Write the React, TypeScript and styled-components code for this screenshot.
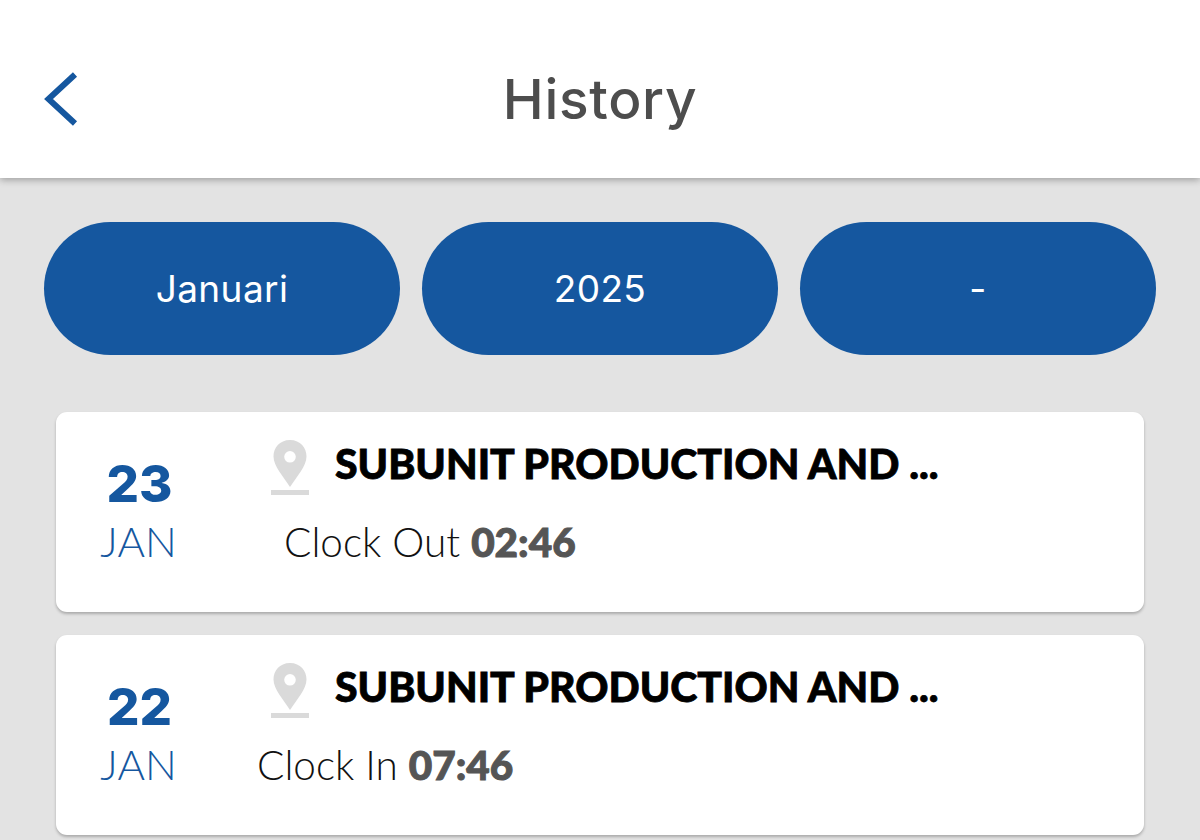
import React from "react";
import styled, { createGlobalStyle } from "styled-components";

const history = [
  { day: "23", month: "JAN", label: "Clock Out", time: "02:46", indent: 27 },
  { day: "22", month: "JAN", label: "Clock In", time: "07:46", indent: 0 },
];

export default function App() {
  return (
    <Page>
      <GlobalStyle />
      <Header>
        <BackButton>
          <svg width="36" height="56" viewBox="0 0 36 56" fill="none">
            <path d="M32 3.5 L5.5 28 L32 52.5" stroke="#15579f" strokeWidth="6" />
          </svg>
        </BackButton>
        <Title>History</Title>
      </Header>
      <Filters>
        <Pill>Januari</Pill>
        <Pill>2025</Pill>
        <Pill>-</Pill>
      </Filters>
      <CardList>
        {history.map((item) => (
          <Card key={item.day}>
            <DateBlock>
              <Day>{item.day}</Day>
              <Month>{item.month}</Month>
            </DateBlock>
            <Details>
              <LocationRow>
                <svg width="40" height="56" viewBox="0 0 40 56">
                  <path
                    fillRule="evenodd"
                    d="M20 0 C9.5 0 3.5 8 3.5 16.5 C3.5 26 13 36 20 47 C27 36 36.5 26 36.5 16.5 C36.5 8 30.5 0 20 0 Z M20 11 A5.8 5.8 0 1 0 20 22.6 A5.8 5.8 0 1 0 20 11 Z"
                    fill="#dadada"
                  />
                  <rect x="1" y="50" width="38" height="5" fill="#dadada" />
                </svg>
                <Location>SUBUNIT PRODUCTION AND ...</Location>
              </LocationRow>
              <ClockRow $indent={item.indent}>
                {item.label} <Time>{item.time}</Time>
              </ClockRow>
            </Details>
          </Card>
        ))}
      </CardList>
    </Page>
  );
}

const GlobalStyle = createGlobalStyle`
  html, body {
    margin: 0;
    padding: 0;
    background: #e3e3e3;
  }
`;

const Page = styled.div`
  width: 1200px;
  height: 840px;
  overflow: hidden;
  background: #e3e3e3;
`;

const Header = styled.header`
  height: 178px;
  background: #fff;
  box-shadow: 0 2px 7px rgba(0, 0, 0, 0.3);
  display: flex;
  align-items: center;
  justify-content: center;
  position: relative;
`;

const BackButton = styled.div`
  position: absolute;
  left: 43px;
  top: 71px;
  line-height: 0;
`;

const Title = styled.h1`
  margin: 0;
  font-family: Inter, "Liberation Sans", sans-serif;
  font-size: 55px;
  font-weight: 500;
  letter-spacing: 0.7px;
  color: #4d4d4d;
  padding-top: 20px;
`;

const Filters = styled.div`
  display: flex;
  gap: 22px;
  padding: 44px 44px 0;
`;

const Pill = styled.div`
  flex: 1;
  height: 133px;
  border-radius: 67px;
  background: #15579f;
  color: #fff;
  display: flex;
  align-items: center;
  justify-content: center;
  font-family: Inter, "Liberation Sans", sans-serif;
  font-size: 37px;
  letter-spacing: 0.4px;
`;

const CardList = styled.div`
  display: flex;
  flex-direction: column;
  gap: 23px;
  padding: 57px 56px 0;
`;

const Card = styled.div`
  height: 200px;
  flex: none;
  background: #fff;
  border-radius: 11px;
  box-shadow: 0 2px 3px rgba(0, 0, 0, 0.25);
  display: flex;
`;

const DateBlock = styled.div`
  width: 165px;
  padding-top: 41px;
  display: flex;
  flex-direction: column;
  align-items: center;
`;

const Day = styled.div`
  font-family: Inter, "Liberation Sans", sans-serif;
  font-size: 51px;
  font-weight: 800;
  line-height: 62px;
  color: #15579f;
  padding-left: 2px;
`;

const Month = styled.div`
  font-family: Lato, "Liberation Sans", sans-serif;
  font-size: 42px;
  font-weight: 300;
  line-height: 50px;
  color: #15579f;
  margin-top: 1px;
`;

const Details = styled.div`
  padding-left: 36px;
  display: flex;
  flex-direction: column;
`;

const LocationRow = styled.div`
  display: flex;
  align-items: flex-start;
  gap: 25px;
  padding: 28px 0 0 13px;
`;

const Location = styled.div`
  font-family: Lato, "Liberation Sans", sans-serif;
  font-size: 41px;
  font-weight: 900;
  line-height: 48px;
  color: #000;
  white-space: nowrap;
  -webkit-text-stroke: 0.8px #000;
`;

const ClockRow = styled.div<{ $indent: number }>`
  font-family: Lato, "Liberation Sans", sans-serif;
  font-size: 40.5px;
  font-weight: 300;
  line-height: 50px;
  color: #111;
  margin-top: 21px;
  padding-left: ${(props) => props.$indent}px;
  white-space: nowrap;
`;

const Time = styled.span`
  font-weight: 900;
  color: #555;
  -webkit-text-stroke: 1px #555;
`;
